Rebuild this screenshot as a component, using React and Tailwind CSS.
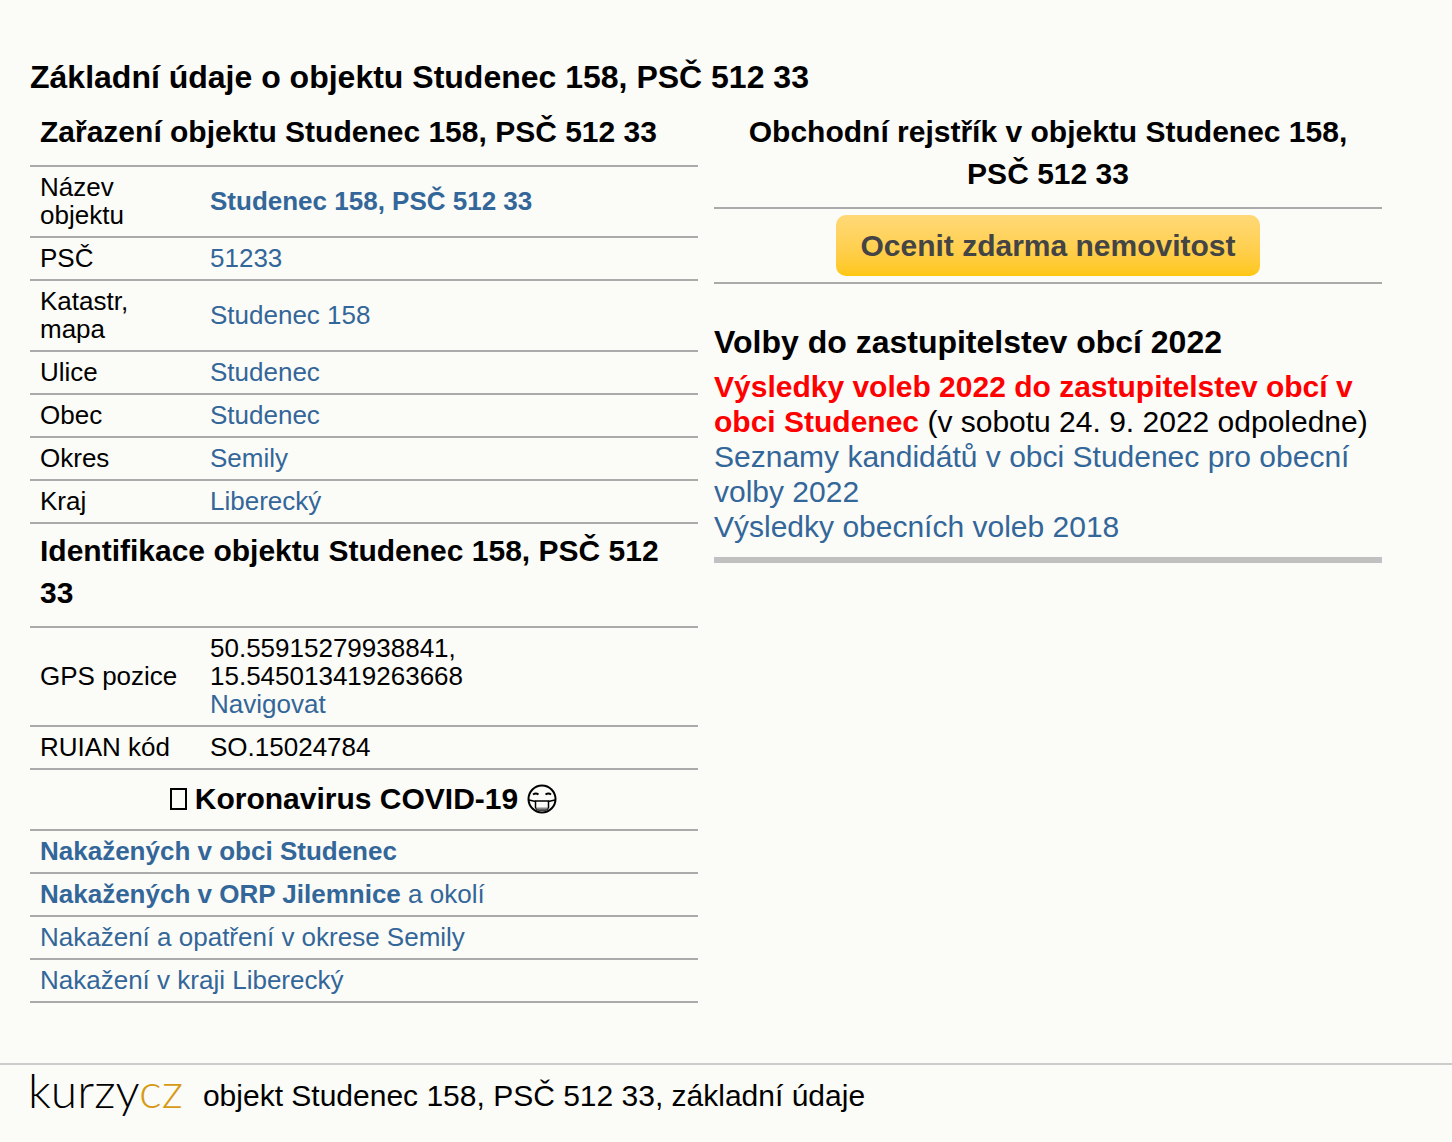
const placement = [
  { label: "Název objektu", value: "Studenec 158, PSČ 512 33", bold: true },
  { label: "PSČ", value: "51233" },
  { label: "Katastr, mapa", value: "Studenec 158" },
  { label: "Ulice", value: "Studenec" },
  { label: "Obec", value: "Studenec" },
  { label: "Okres", value: "Semily" },
  { label: "Kraj", value: "Liberecký" },
];

function Link({ children, className = "text-[#369]" }) {
  return (
    <a href="#" className={className}>
      {children}
    </a>
  );
}

function SectionHeader({ children, className = "pt-1.5 pb-3 text-left" }) {
  return (
    <tr className="border-b-2 border-[#aaa]">
      <th
        colSpan={2}
        scope="colgroup"
        className={`px-2.5 text-[30px] leading-[42px] font-bold ${className}`}
      >
        {children}
      </th>
    </tr>
  );
}

function Row({ label, children }) {
  return (
    <tr className="border-b-2 border-[#aaa]">
      <th scope="row" className="px-2.5 pt-1.5 pb-[7px] text-left font-normal">
        {label}
      </th>
      <td className="px-2.5 pt-1.5 pb-[7px]">{children}</td>
    </tr>
  );
}

function WideRow({ children }) {
  return (
    <tr className="border-b-2 border-[#aaa]">
      <td colSpan={2} className="px-2.5 pt-1.5 pb-[7px]">
        {children}
      </td>
    </tr>
  );
}

function MaskFace() {
  return (
    <svg
      width="32"
      height="32"
      viewBox="0 0 32 32"
      fill="none"
      stroke="black"
      strokeWidth="2"
      aria-hidden="true"
    >
      <circle cx="16" cy="16" r="13.500" />
      <path d="M7 11.500q3-2 5.500 0M19.500 11.500q3-2 5.500 0" />
      <path d="M3 17l6.500 1.500M29 17l-6.500 1.500" strokeWidth="1.500" />
      <path d="M9.500 18h13v6.500q-1 2.500-3 2.500h-7q-2 0-3-2.500z" strokeWidth="1.500" />
      <path d="M10.500 25.500h11" stroke="#888" />
    </svg>
  );
}

export default function App() {
  return (
    <div className="min-h-screen bg-[#fbfbf7] font-['Liberation_Sans',Arial,sans-serif] text-black">
      <main className="pt-14 pr-[70px] pb-[60px] pl-[30px]">
        <h1 className="text-[32px] leading-[42px] font-bold">
          Základní údaje o objektu Studenec 158, PSČ 512 33
        </h1>

        <div className="mt-[7px] grid grid-cols-2 items-start gap-4">
          <table className="w-full table-fixed border-collapse text-[26px] leading-7">
            <colgroup>
              <col className="w-[170px]" />
              <col />
            </colgroup>
            <tbody>
              <SectionHeader>Zařazení objektu Studenec 158, PSČ 512 33</SectionHeader>
              {placement.map((item) => (
                <Row key={item.label} label={item.label}>
                  <Link className={item.bold ? "font-bold text-[#369]" : "text-[#369]"}>
                    {item.value}
                  </Link>
                </Row>
              ))}

              <SectionHeader>Identifikace objektu Studenec 158, PSČ 512 33</SectionHeader>
              <Row label="GPS pozice">
                50.55915279938841,
                <br />
                15.545013419263668
                <br />
                <Link>Navigovat</Link>
              </Row>
              <Row label="RUIAN kód">SO.15024784</Row>

              <SectionHeader className="pt-2 pb-[9px] text-center">
                <span className="flex items-center justify-center gap-2">
                  <span className="h-[22px] w-[17px] border-2 border-black" />
                  Koronavirus COVID-19
                  <MaskFace />
                </span>
              </SectionHeader>
              <WideRow>
                <Link className="font-bold text-[#369]">Nakažených v obci Studenec</Link>
              </WideRow>
              <WideRow>
                <Link>
                  <b>Nakažených v ORP Jilemnice</b> a okolí
                </Link>
              </WideRow>
              <WideRow>
                <Link>Nakažení a opatření v okrese Semily</Link>
              </WideRow>
              <WideRow>
                <Link>Nakažení v kraji Liberecký</Link>
              </WideRow>
            </tbody>
          </table>

          <section>
            <h2 className="border-b-2 border-[#aaa] px-2.5 pt-1.5 pb-3 text-center text-[30px] leading-[42px] font-bold">
              Obchodní rejstřík v objektu Studenec 158, PSČ 512 33
            </h2>
            <div className="flex justify-center border-b-2 border-[#aaa] py-1.5">
              <button
                type="button"
                className="rounded-[10px] bg-linear-to-b from-[#ffd977] to-[#ffc70d] px-6 py-3 text-[30px] leading-[37px] font-bold text-[#444]"
              >
                Ocenit zdarma nemovitost
              </button>
            </div>

            <h2 className="mt-[37px] text-[32px] leading-[42px] font-bold">
              Volby do zastupitelstev obcí 2022
            </h2>
            <div className="mt-1.5 border-b-6 border-[#c0c0c0] pb-[13px] text-[30px] leading-[35px]">
              <p>
                <Link className="font-bold text-[#f00]">
                  Výsledky voleb 2022 do zastupitelstev obcí v obci Studenec
                </Link>{" "}
                (v sobotu 24. 9. 2022 odpoledne)
              </p>
              <p>
                <Link>Seznamy kandidátů v obci Studenec pro obecní volby 2022</Link>
              </p>
              <p>
                <Link>Výsledky obecních voleb 2018</Link>
              </p>
            </div>
          </section>
        </div>
      </main>

      <footer className="flex items-center gap-5 border-t-2 border-[#ccc] px-7 pt-1 text-[30px] leading-[54px]">
        <a href="#" className="pb-3 font-[Lato] text-5xl leading-[42px] font-light">
          kurzy<span className="text-[#d69a14]">cz</span>
        </a>
        <span>objekt Studenec 158, PSČ 512 33, základní údaje</span>
      </footer>
    </div>
  );
}
